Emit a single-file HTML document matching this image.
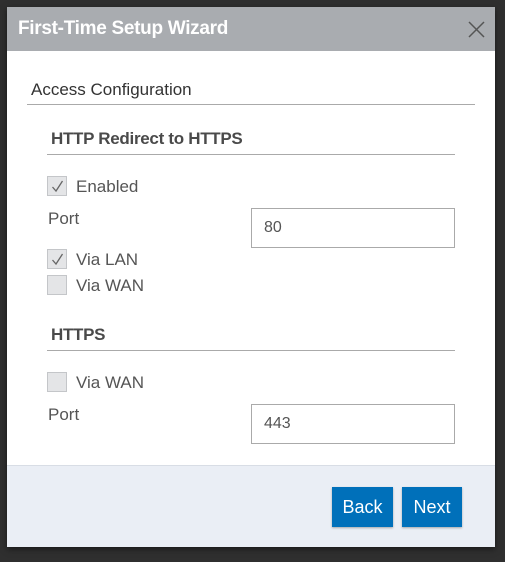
<!DOCTYPE html>
<html><head><style>
*{margin:0;padding:0;box-sizing:border-box}
body{width:505px;height:562px;background:#2f2f2f;font-family:"Liberation Sans",sans-serif;position:relative;overflow:hidden}
.dlg{position:absolute;left:7px;top:7px;width:488px;height:540px;background:#fff;box-shadow:0 2px 6px rgba(0,0,0,.5)}
.hdr{position:absolute;left:0;top:0;width:488px;height:44px;background:#a9acb0;color:#fff;font-size:19px;font-weight:bold;padding:11px 11px;letter-spacing:-0.3px}
.x{position:absolute;right:10px;top:14px;width:17px;height:17px}
.t{position:absolute;color:#333;font-size:17px}
.h{position:absolute;color:#4a4a4a;font-size:17px;font-weight:bold;letter-spacing:-0.3px}
.line{position:absolute;height:1px;background:#aaa}
.lab{position:absolute;color:#555;font-size:17px}
.cb{position:absolute;width:20px;height:20px;background:#e4e5e7;border:1px solid #c4c6c9}
.cb svg{position:absolute;left:3px;top:3px}
.inp{position:absolute;left:244px;width:204px;height:40px;border:1px solid #aaa;color:#555;font-size:16px;padding:10px 12px}
.ftr{position:absolute;left:0;top:458px;width:488px;height:82px;background:#eaeef5;border-top:1px solid #d8dde5}
.btn{position:absolute;top:480px;height:40px;background:#0070ba;color:#fff;font-size:18px;text-align:center;line-height:40px;box-shadow:0 1px 2px rgba(0,0,0,.3)}
</style></head><body>
<div class="dlg">
<div class="hdr">First-Time Setup Wizard
<svg class="x" viewBox="0 0 17 17"><path d="M1 1L16 16M16 1L1 16" stroke="#555" stroke-width="1.5"/></svg></div>
<div class="t" style="left:24px;top:73px">Access Configuration</div>
<div class="line" style="left:20px;top:97px;width:448px"></div>
<div class="h" style="left:44px;top:122px">HTTP Redirect to HTTPS</div>
<div class="line" style="left:40px;top:147px;width:408px"></div>
<div class="cb" style="left:40px;top:169px"><svg width="13" height="13" viewBox="0 0 13 13"><path d="M1.5 7L5 11L11.5 1" stroke="#666" stroke-width="1.3" fill="none"/></svg></div>
<div class="lab" style="left:69px;top:170px">Enabled</div>
<div class="lab" style="left:41px;top:202px">Port</div>
<div class="inp" style="top:201px">80</div>
<div class="cb" style="left:40px;top:242px"><svg width="13" height="13" viewBox="0 0 13 13"><path d="M1.5 7L5 11L11.5 1" stroke="#666" stroke-width="1.3" fill="none"/></svg></div>
<div class="lab" style="left:69px;top:243px">Via LAN</div>
<div class="cb" style="left:40px;top:268px"></div>
<div class="lab" style="left:69px;top:269px">Via WAN</div>
<div class="h" style="left:44px;top:318px">HTTPS</div>
<div class="line" style="left:40px;top:343px;width:408px"></div>
<div class="cb" style="left:40px;top:365px"></div>
<div class="lab" style="left:69px;top:366px">Via WAN</div>
<div class="lab" style="left:41px;top:398px">Port</div>
<div class="inp" style="top:397px">443</div>
<div class="ftr"></div>
<div class="btn" style="left:325px;width:61px">Back</div>
<div class="btn" style="left:395px;width:60px">Next</div>
</div>
</body></html>
